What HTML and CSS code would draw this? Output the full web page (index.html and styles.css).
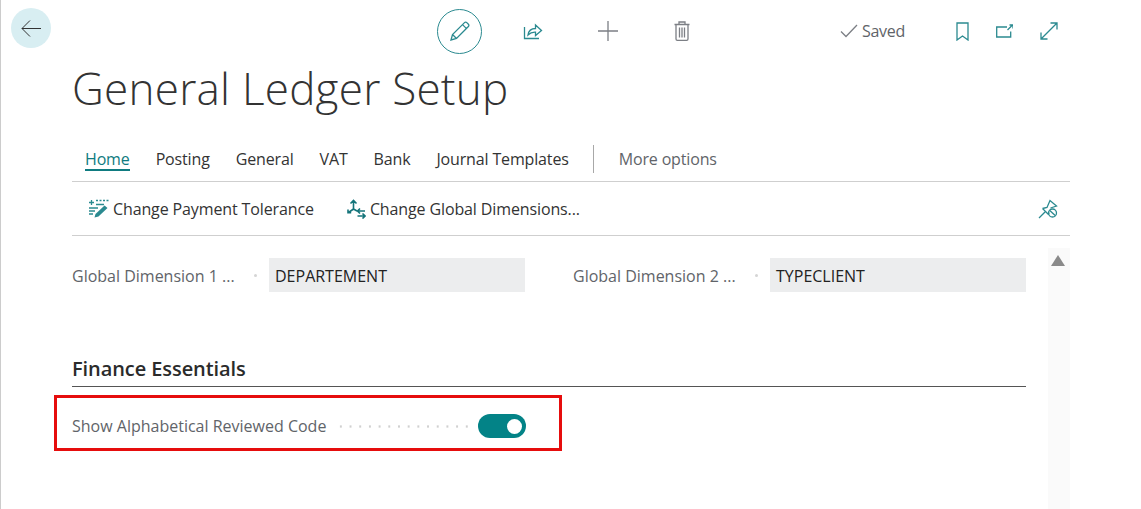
FILE: index.html
```html
<!DOCTYPE html>
<html lang="en">
<head>
<meta charset="utf-8">
<title>General Ledger Setup</title>
<link rel="stylesheet" href="styles.css">
</head>
<body>
<div class="page">
  <header class="topbar">
    <button class="back" aria-label="Back">
      <svg width="20" height="17" viewBox="0 0 20 17"><path d="M20 8.500H1M9 .5 1 8.500l8 8" class="ln-dark"/></svg>
    </button>
    <div class="tools">
      <span class="edit">
        <svg width="22" height="22" viewBox="0 0 22 22"><path d="M2 20l1.500-5.500L15.500 2.600a1.600 1.600 0 0 1 2.300 0l1.600 1.600a1.600 1.600 0 0 1 0 2.300L7.500 18.500zM3.500 14.500l4 4M13.500 4.600l4 4" class="ln-teal"/></svg>
      </span>
      <svg class="tool share" width="20" height="18" viewBox="0 0 20 18"><path d="M1.500 5v11.500H16M5 13c.6-4 3.400-6.500 7.500-6.500V3l6 5.500-6 5V10.200C9.500 10 7 11 5 13z" class="ln-teal"/></svg>
      <svg class="tool plus" width="20" height="20" viewBox="0 0 20 20"><path d="M10 0v20M0 10h20" class="ln-gray"/></svg>
      <svg class="tool trash" width="16" height="20" viewBox="0 0 16 20"><path d="M.5 3.500h15M5 3.500V1h6v2.500M2 3.500V18a1.300 1.300 0 0 0 1.300 1.300h9.400A1.300 1.300 0 0 0 14 18V3.500M5.500 6.500v10M8 6.500v10M10.500 6.500v10" class="ln-gray"/></svg>
    </div>
    <div class="status">
      <svg width="18" height="14" viewBox="0 0 18 14"><path d="M1 7.500 6 12.500 17 1" class="ln-gray"/></svg>
      <span>Saved</span>
    </div>
    <div class="views">
      <svg width="13" height="19" viewBox="0 0 13 19"><path d="M1 1h11v17l-5.500-4L1 18z" class="ln-teal"/></svg>
      <svg width="17" height="14" viewBox="0 0 17 14"><path d="M11 3H.7v10h14V7.500M11.500 6 16 1.500M13.500 1H17v3.500" class="ln-teal"/></svg>
      <svg width="18" height="18" viewBox="0 0 18 18"><path d="M1 17 17 1M10.500 1H17v6.500M1 10.500V17h6.500" class="ln-teal"/></svg>
    </div>
  </header>

  <main class="main">
    <h1 class="title">General Ledger Setup</h1>

    <nav class="tabs">
      <a class="tab active">Home</a>
      <a class="tab">Posting</a>
      <a class="tab">General</a>
      <a class="tab">VAT</a>
      <a class="tab">Bank</a>
      <a class="tab">Journal Templates</a>
      <span class="tab-sep"></span>
      <a class="tab muted">More options</a>
    </nav>

    <div class="actions">
      <a class="action first">
        <svg width="21" height="19" viewBox="0 0 21 19"><path d="M1 3.500h5M3.500 1v5M8 1.500h2M11.500 1.500h2M15 1.500h2M18.500 1.500h2M8 5.500h8M1 9h9M1 12h6M1 15h4" class="ln-teal"/><path d="M6.500 18.500l1-3.500 9-8.500 3 2.500-9 8.500z" class="fill-teal"/></svg>
        <span>Change Payment Tolerance</span>
      </a>
      <a class="action second">
        <svg width="19" height="20" viewBox="0 0 19 20"><path d="M6.500 10V2M3.500 4.500l3-3 3 3M6.500 10 1.500 13.500M6.500 10l3.500 2M1 10.500v3.300h3.200" class="ln-deep"/><path d="M18 12h-7.500M13 9.500 10.500 12l2.500 2.500M10.500 17H18M15.500 14.500 18 17l-2.500 2.500" class="ln-deep"/></svg>
        <span>Change Global Dimensions...</span>
      </a>
      <svg class="pin" width="20" height="20" viewBox="0 0 20 20"><path d="M1 19l6-6M4.500 9.500l6 6M4.500 9.500 9 8.500 12 1.500l6.500 5.500-6 2M10.500 15.500l.5-2" class="ln-teal"/><circle cx="14.500" cy="14" r="4" class="ln-teal"/><path d="M11.800 11.500l5.400 5" class="ln-teal"/></svg>
    </div>

    <div class="body">
      <div class="form">
        <div class="fields">
          <div class="field">
            <span class="label">Global Dimension 1 ...</span>
            <span class="dot-one"></span>
            <span class="value">DEPARTEMENT</span>
          </div>
          <div class="field">
            <span class="label">Global Dimension 2 ...</span>
            <span class="dot-one"></span>
            <span class="value">TYPECLIENT</span>
          </div>
        </div>

        <h2 class="section">Finance Essentials</h2>

        <div class="toggle-row">
          <span class="toggle-label">Show Alphabetical Reviewed Code</span>
          <span class="dots"></span>
          <span class="switch"><span class="knob"></span></span>
          <span class="highlight"></span>
        </div>
      </div>
      <div class="scrollbar"><span class="arrow"></span></div>
    </div>
  </main>
</div>
</body>
</html>
```
FILE: styles.css
```css
* { box-sizing: border-box; }
html, body { margin: 0; height: 100%; background: #fff; }
body { font-family: "Open Sans", "Liberation Sans", sans-serif; color: #333; overflow: hidden; }
svg { display: block; flex: none; }
.ln-teal, .ln-dark, .ln-gray, .ln-deep { fill: none; stroke-width: 1.3; }
.ln-teal { stroke: #2b8a90; }
.ln-deep { stroke: #14747a; stroke-width: 1.6; }
.fill-teal { fill: #2b8a90; }
.ln-dark { stroke: #333; stroke-width: 1; }
.ln-gray { stroke: #7c7f85; }

.page { height: 509px; border-left: 1px solid #ccc; }

.topbar { display: flex; align-items: center; height: 62px; padding-left: 10px; }
.back { width: 40px; height: 40px; margin-top: -6px; padding: 0; border: 0; border-radius: 50%; background: #d8eef2; display: flex; align-items: center; justify-content: center; }
.tools { display: flex; align-items: center; margin-left: 386px; }
.edit { width: 45px; height: 45px; border: 1px solid #2b8a90; border-radius: 50%; display: flex; align-items: center; justify-content: center; }
.share { margin-left: 41px; }
.plus { margin-left: 55px; }
.trash { margin-left: 56px; }
.status { display: flex; align-items: center; gap: 4px; margin-left: 150px; font-size: 16px; color: #616469; letter-spacing: -.3px; }
.views { display: flex; align-items: center; margin-left: 51px; gap: 27px; }

.main { padding-left: 71px; width: 1069px; }
.title { margin: 0; font-size: 44px; font-weight: 300; line-height: 52px; color: #333; height: 67px; letter-spacing: .25px; }

.tabs { display: flex; align-items: center; gap: 26px; height: 53px; padding: 7px 13px 0; border-bottom: 1px solid #cfcfcf; font-size: 16px; letter-spacing: -.15px; }
.tab { color: #333; line-height: 26px; height: 25px; }
.tab.active { color: #0f7b80; border-bottom: 2px solid #0f7b80; }
.tab.muted { color: #616469; }
.tab-sep { width: 1px; height: 28px; margin: 0 -1px 0 -2px; background: #a8a8a8; }

.actions { display: flex; align-items: center; height: 54px; padding: 0 12px 0 16px; border-bottom: 1px solid #cfcfcf; font-size: 16px; letter-spacing: -.12px; }
.action { display: flex; align-items: center; gap: 4px; }
.second { margin-left: 33px; }
.pin { margin-left: auto; }

.body { display: flex; padding-top: 12px; }
.form { width: 954px; }
.fields { display: grid; grid-template-columns: 453px 453px; gap: 48px; padding-top: 10px; }
.field { display: flex; align-items: center; height: 34px; font-size: 16px; }
.label { width: 173px; padding-top: 2px; color: #616469; white-space: nowrap; }
.dot-one { width: 3px; height: 3px; margin-right: 12px; margin-left: 9px; border-radius: 50%; background: #d5d5d5; }
.value { flex: 1; align-self: stretch; display: flex; align-items: center; padding: 2px 0 0 6px; background: #ecedee; color: #222; }

.section { margin: 63px 0 0; height: 32px; font-size: 20px; font-weight: 600; line-height: 27px; color: #2b2b2b; border-bottom: 1px solid #555; letter-spacing: -.08px; }

.toggle-row { position: relative; display: flex; align-items: center; height: 24px; margin-top: 27px; font-size: 16px; }
.toggle-label { color: #616469; white-space: nowrap; }
.dots { width: 136px; height: 3px; margin-left: 10px; margin-right: -2px; background: radial-gradient(circle, #d0d0d0 1px, transparent 1.3px) 0 0 / 9.7px 3px repeat-x; }
.switch { width: 48px; height: 24px; margin-left: 8px; border-radius: 12px; background: #038387; display: flex; align-items: center; justify-content: flex-end; padding-right: 4px; }
.knob { width: 15px; height: 15px; border-radius: 50%; background: #fff; }
.highlight { position: absolute; left: -18px; top: -19px; width: 508px; height: 56px; border: 3px solid #e60d0d; pointer-events: none; }

.scrollbar { width: 22px; height: 262px; margin-left: 22px; background: #fafafa; padding: 7px 0 0 3px; }
.arrow { display: block; width: 0; height: 0; border-left: 7.500px solid transparent; border-right: 7.500px solid transparent; border-bottom: 11px solid #8a8a8a; }
```
